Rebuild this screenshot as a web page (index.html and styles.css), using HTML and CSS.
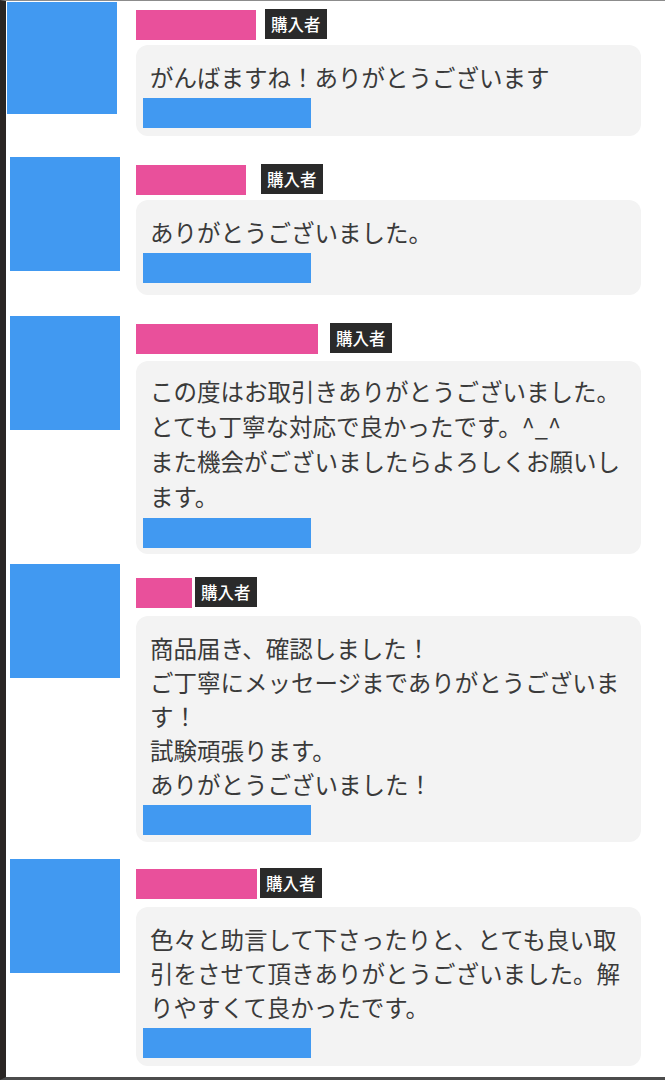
FILE: index.html
```html
<!DOCTYPE html>
<html lang="ja">
<head>
<meta charset="utf-8">
<title>取引メッセージ</title>
<link rel="stylesheet" href="styles.css">
</head>
<body>
<div class="page">
  <ul class="thread">
    <li class="msg msg--1">
      <div class="avatar"></div>
      <div class="msg__body">
        <div class="msg__head">
          <span class="name name--120"></span>
          <span class="badge">購入者</span>
        </div>
        <div class="bubble">
          <p class="bubble__text">がんばますね！ありがとうございます</p>
          <div class="bubble__date"></div>
        </div>
      </div>
    </li>
    <li class="msg msg--2">
      <div class="avatar"></div>
      <div class="msg__body">
        <div class="msg__head">
          <span class="name name--110"></span>
          <span class="badge">購入者</span>
        </div>
        <div class="bubble">
          <p class="bubble__text">ありがとうございました。</p>
          <div class="bubble__date"></div>
        </div>
      </div>
    </li>
    <li class="msg msg--3">
      <div class="avatar"></div>
      <div class="msg__body">
        <div class="msg__head">
          <span class="name name--182"></span>
          <span class="badge">購入者</span>
        </div>
        <div class="bubble">
          <p class="bubble__text">この度はお取引きありがとうございました。
とても丁寧な対応で良かったです。^_^
また機会がございましたらよろしくお願いします。</p>
          <div class="bubble__date"></div>
        </div>
      </div>
    </li>
    <li class="msg msg--4">
      <div class="avatar"></div>
      <div class="msg__body">
        <div class="msg__head">
          <span class="name name--56"></span>
          <span class="badge">購入者</span>
        </div>
        <div class="bubble">
          <p class="bubble__text">商品届き、確認しました！
ご丁寧にメッセージまでありがとうございます！
試験頑張ります。
ありがとうございました！</p>
          <div class="bubble__date"></div>
        </div>
      </div>
    </li>
    <li class="msg msg--5">
      <div class="avatar"></div>
      <div class="msg__body">
        <div class="msg__head">
          <span class="name name--121"></span>
          <span class="badge">購入者</span>
        </div>
        <div class="bubble">
          <p class="bubble__text">色々と助言して下さったりと、とても良い取引をさせて頂きありがとうございました。解りやすくて良かったです。</p>
          <div class="bubble__date"></div>
        </div>
      </div>
    </li>
  </ul>
</div>
</body>
</html>
```

FILE: styles.css
```css
* {
  box-sizing: border-box;
}

html, body {
  margin: 0;
  padding: 0;
  background: #ffffff;
}

body {
  font-family: "Noto Sans CJK JP", "Noto Sans", sans-serif;
  color: #333333;
}

.page {
  width: 665px;
  height: 1080px;
  border-left: 6px solid #2a2624;
  border-top: 1px solid #8c8c8c;
  border-bottom: 3px solid #4c4c4c;
  overflow: hidden;
}

.thread {
  list-style: none;
  margin: 0;
  padding: 1px 0 0 0;
}

.msg {
  display: flex;
  align-items: flex-start;
}

.avatar {
  flex: 0 0 110px;
  width: 110px;
  height: 114px;
  margin-left: 4px;
  margin-right: 16px;
  background: #4199f1;
}

.msg__body {
  width: 505px;
}

.msg__head {
  display: flex;
  align-items: center;
  height: 30px;
}

.name {
  display: block;
  height: 30px;
  background: #e9509b;
}

.name--120 { width: 120px; margin-right: 9px; }
.name--110 { width: 110px; margin-right: 15px; }
.name--182 { width: 182px; margin-right: 12px; }
.name--56  { width: 56px;  margin-right: 3px; }
.name--121 { width: 121px; margin-right: 3px; }

.badge {
  display: block;
  height: 30px;
  padding: 0 6px;
  background: #2a2a2a;
  color: #ffffff;
  font-size: 16.5px;
  font-weight: 500;
  line-height: 30px;
  margin-top: -2px;
}

.bubble {
  background: #f3f3f3;
  border-radius: 12px;
  padding: 15px 7px 8px 7px;
}

.bubble__text {
  margin: 0;
  padding: 0 4px 0 7px;
  font-size: 23.5px;
  line-height: 34px;
  white-space: pre-line;
  color: #3a3a3a;
}

.bubble__date {
  width: 168px;
  height: 30px;
  margin-top: 4px;
  background: #4199f1;
}

/* per-row offsets */
.msg--1 .avatar { margin-left: 1px; margin-right: 19px; height: 112px; }
.msg--1 .msg__body { margin-top: 8px; }
.msg--1 .bubble { margin-top: 5px; }

.msg--2 { margin-top: 21px; }
.msg--2 .msg__body { margin-top: 8px; }
.msg--2 .bubble { margin-top: 5px; padding-bottom: 12px; }

.msg--3 { margin-top: 21px; }
.msg--3 .msg__body { margin-top: 8px; }
.msg--3 .bubble { margin-top: 7px; padding-top: 13px; padding-bottom: 6px; }
.msg--3 .bubble__text { line-height: 35px; }

.msg--4 { margin-top: 10px; }
.msg--4 .msg__body { margin-top: 14px; }
.msg--4 .bubble { margin-top: 8px; padding-bottom: 7px; }

.msg--5 { margin-top: 17px; }
.msg--5 .msg__body { margin-top: 10px; }
.msg--5 .bubble { margin-top: 8px; }
```
